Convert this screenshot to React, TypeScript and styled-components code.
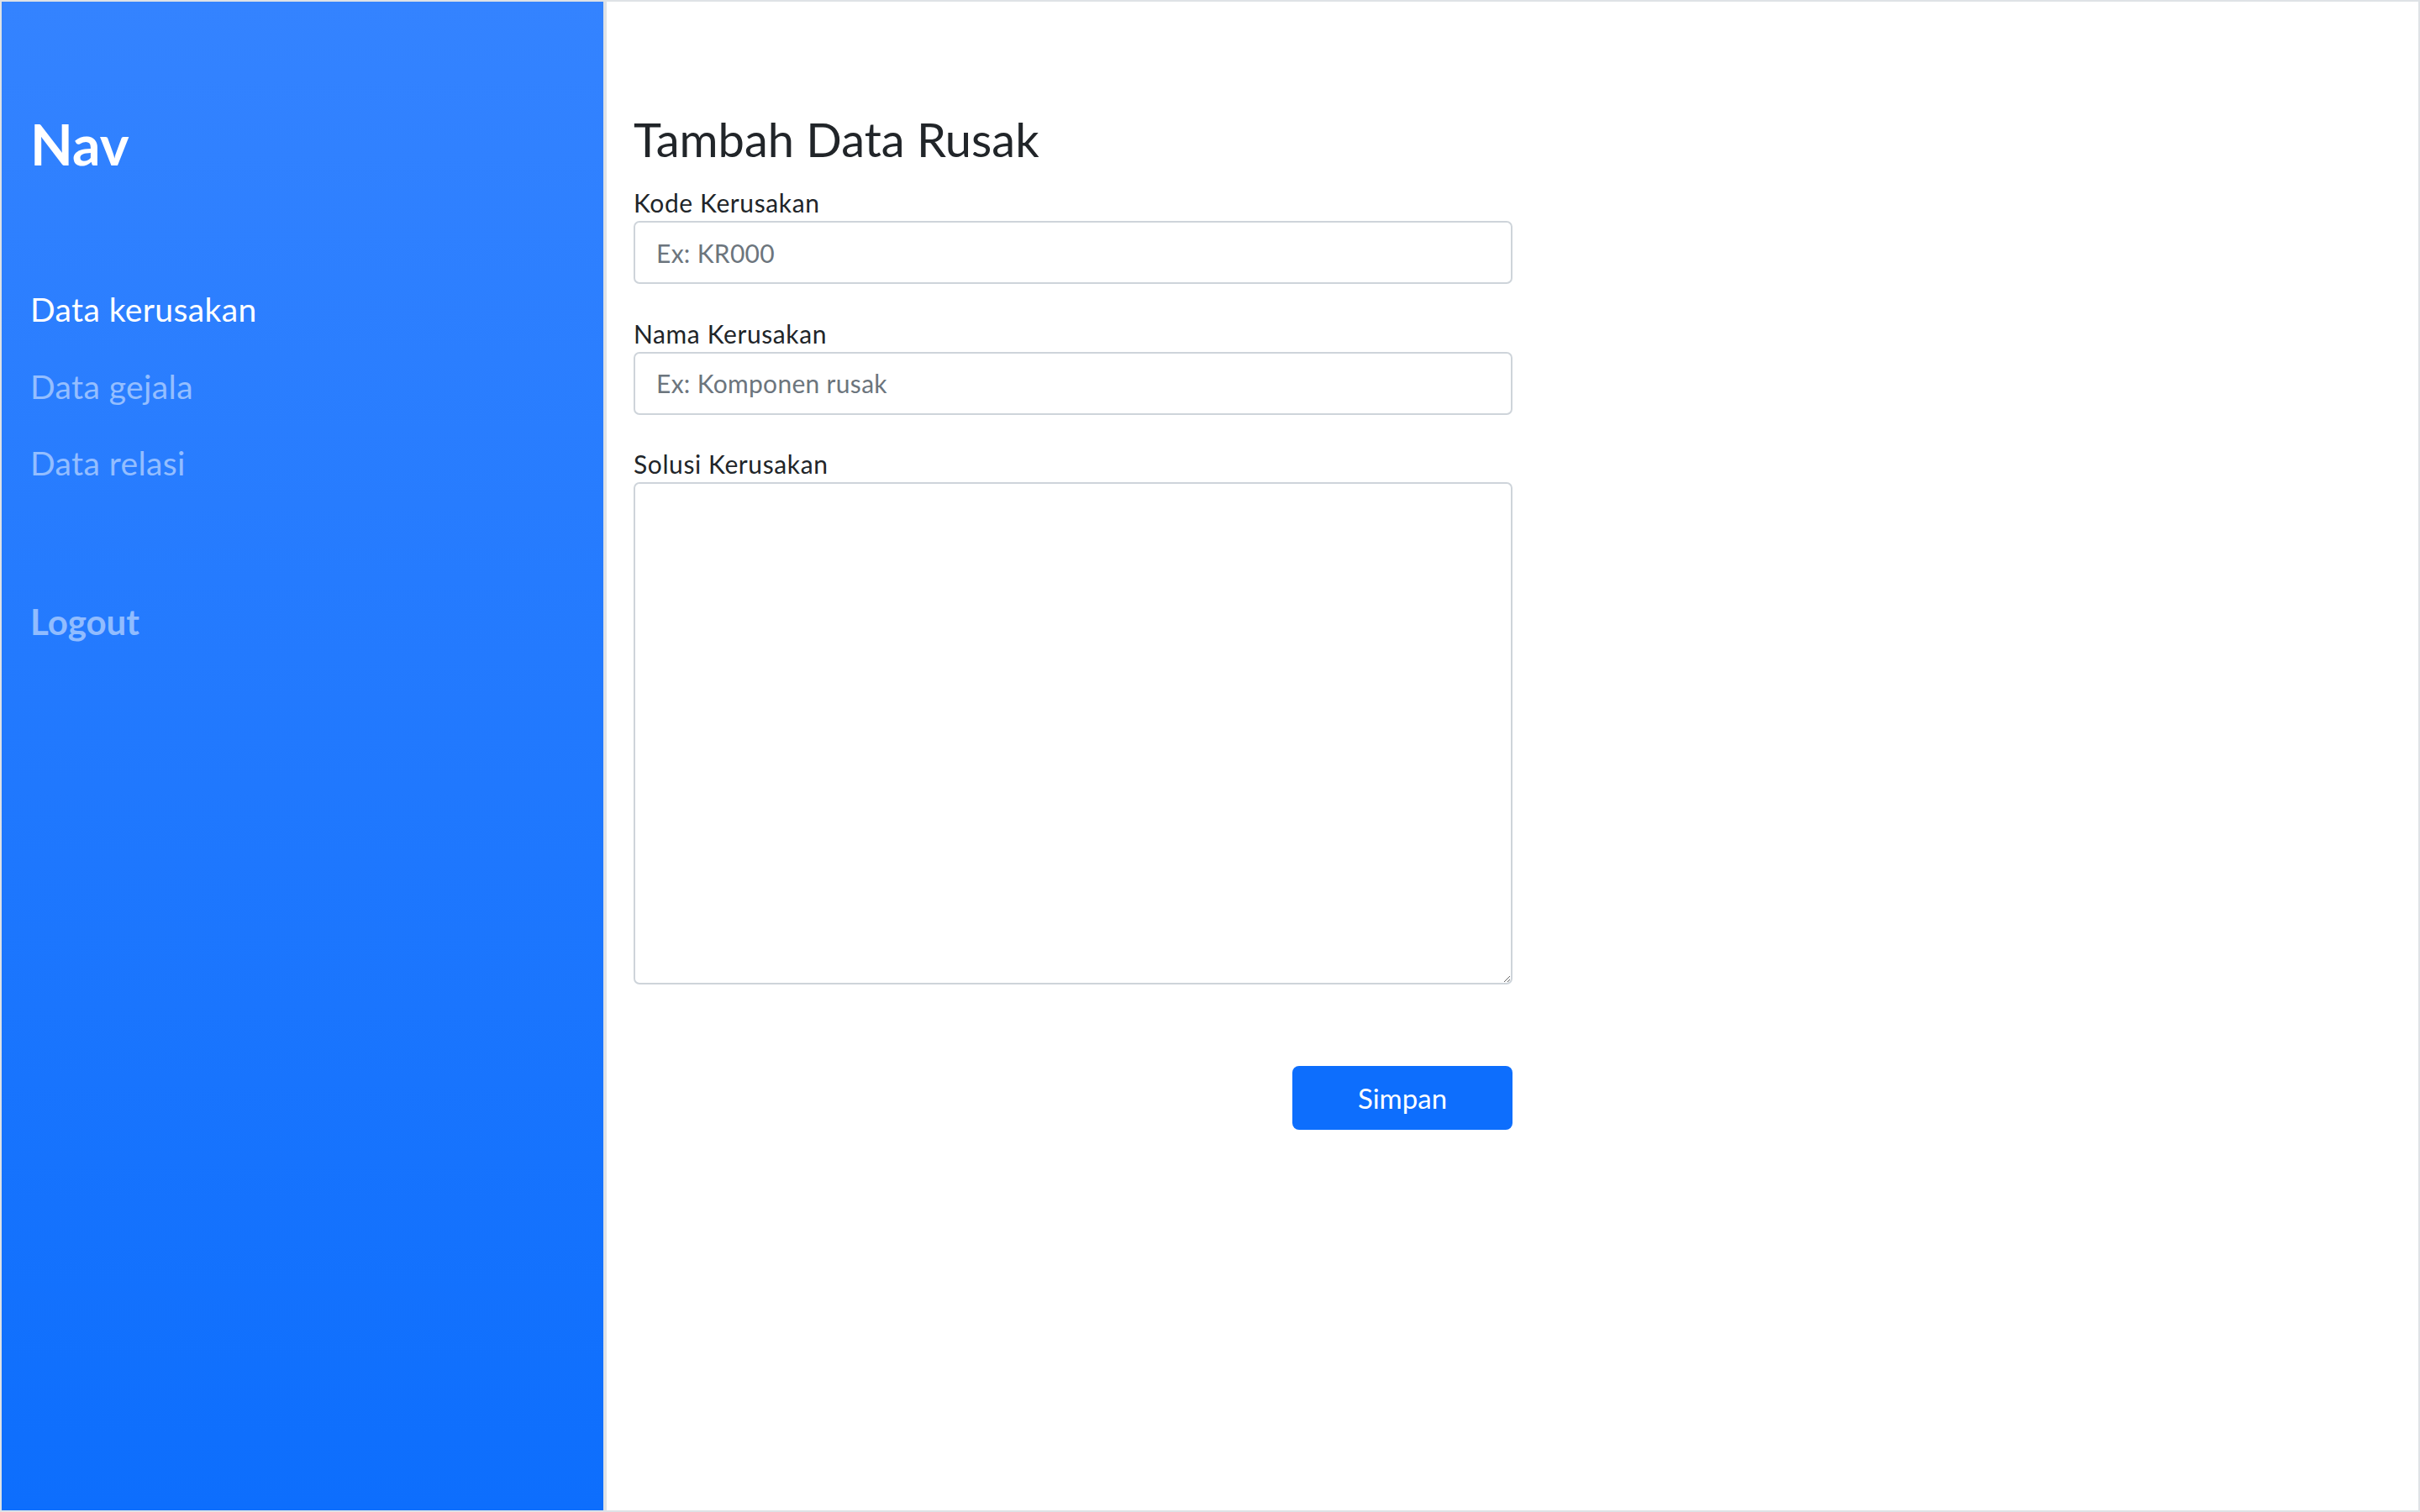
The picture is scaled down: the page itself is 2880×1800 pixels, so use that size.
import React from "react";
import styled, { createGlobalStyle } from "styled-components";

const GlobalStyle = createGlobalStyle`
  html, body {
    margin: 0;
    padding: 0;
    background: #ffffff;
  }
  * {
    box-sizing: border-box;
  }
`;

const Frame = styled.div`
  display: flex;
  width: 2880px;
  height: 1800px;
  border: 2px solid #dee2e6;
  font-family: Lato, "Open Sans", sans-serif;
  color: #212529;
`;

const Sidebar = styled.aside`
  display: flex;
  flex-direction: column;
  width: 720px;
  flex-shrink: 0;
  padding: 131px 34px 0 34px;
  background: linear-gradient(180deg, #3483ff 0%, #0d6efd 100%);
  border-right: 4px solid #dee2e6;
`;

const Brand = styled.h1`
  margin: 0 0 136px 0;
  font-size: 66px;
  line-height: 77px;
  font-weight: 700;
  color: #ffffff;
`;

const NavList = styled.nav`
  display: flex;
  flex-direction: column;
  gap: 47.5px;
  margin-bottom: 143px;
`;

const NavLink = styled.a<{ $active?: boolean }>`
  font-size: 39px;
  line-height: 44px;
  letter-spacing: 0.4px;
  text-decoration: none;
  color: ${(p) => (p.$active ? "#ffffff" : "rgba(255, 255, 255, 0.5)")};
  cursor: pointer;
`;

const LogoutLink = styled.a`
  font-size: 42px;
  line-height: 48px;
  font-weight: 700;
  color: rgba(255, 255, 255, 0.5);
  text-decoration: none;
  cursor: pointer;
`;

const Main = styled.main`
  flex: 1;
  padding: 130px 32px 0 32px;
  background: #ffffff;
`;

const Title = styled.h2`
  margin: 0 0 21px 0;
  font-size: 56px;
  line-height: 67px;
  font-weight: 400;
  color: #212529;
`;

const Form = styled.form`
  display: flex;
  flex-direction: column;
  gap: 37.5px;
  width: 1046px;
`;

const Field = styled.div`
  display: flex;
  flex-direction: column;
`;

const Label = styled.label`
  margin-bottom: 1px;
  font-size: 30px;
  line-height: 42px;
  letter-spacing: 0.6px;
  color: #212529;
`;

const Input = styled.input`
  height: 75px;
  padding: 0 25px;
  font-family: inherit;
  font-size: 30px;
  letter-spacing: 0.3px;
  color: #212529;
  background: #ffffff;
  border: 2px solid #ced4da;
  border-radius: 7px;
  outline: none;

  &::placeholder {
    color: #6c757d;
  }
`;

const TextArea = styled.textarea`
  height: 598px;
  padding: 12px 25px;
  font-family: inherit;
  font-size: 30px;
  color: #212529;
  background: #ffffff;
  border: 2px solid #ced4da;
  border-radius: 7px;
  outline: none;
`;

const Actions = styled.div`
  display: flex;
  justify-content: flex-end;
  width: 1046px;
  margin-top: 97px;
`;

const SubmitButton = styled.button`
  width: 262px;
  height: 76px;
  font-family: inherit;
  font-size: 33px;
  color: #ffffff;
  background: #0d6efd;
  border: none;
  border-radius: 8px;
  cursor: pointer;
`;

export default function App() {
  return (
    <>
      <GlobalStyle />
      <Frame>
        <Sidebar>
          <Brand>Nav</Brand>
          <NavList>
            <NavLink $active>Data kerusakan</NavLink>
            <NavLink>Data gejala</NavLink>
            <NavLink>Data relasi</NavLink>
          </NavList>
          <LogoutLink>Logout</LogoutLink>
        </Sidebar>
        <Main>
          <Title>Tambah Data Rusak</Title>
          <Form onSubmit={(e) => e.preventDefault()}>
            <Field>
              <Label>Kode Kerusakan</Label>
              <Input placeholder="Ex: KR000" />
            </Field>
            <Field>
              <Label>Nama Kerusakan</Label>
              <Input placeholder="Ex: Komponen rusak" />
            </Field>
            <Field>
              <Label>Solusi Kerusakan</Label>
              <TextArea />
            </Field>
          </Form>
          <Actions>
            <SubmitButton type="button">Simpan</SubmitButton>
          </Actions>
        </Main>
      </Frame>
    </>
  );
}
